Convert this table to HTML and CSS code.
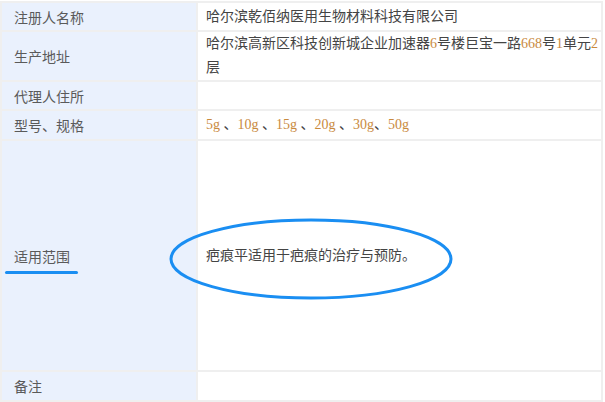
FILE: index.html
```html
<!DOCTYPE html>
<html lang="zh-CN">
<head>
    <meta charset="UTF-8">
    <title>产品注册信息</title>
    <link rel="stylesheet" href="styles.css">
</head>
<body>
    <table class="info-table">
        <tr class="row-1">
            <th>注册人名称</th>
            <td>哈尔滨乾佰纳医用生物材料科技有限公司</td>
        </tr>
        <tr class="row-2">
            <th>生产地址</th>
            <td>哈尔滨高新区科技创新城企业加速器<span class="num">6</span>号楼巨宝一路<span class="num">668</span>号<span class="num">1</span>单元<span class="num">2</span>层</td>
        </tr>
        <tr class="row-3">
            <th>代理人住所</th>
            <td></td>
        </tr>
        <tr class="row-4">
            <th>型号、规格</th>
            <td><span class="num">5g</span> 、<span class="num">10g</span> 、<span class="num">15g</span> 、<span class="num">20g</span> 、<span class="num">30g</span>、<span class="num">50g</span></td>
        </tr>
        <tr class="row-5">
            <th><span class="marked">适用范围</span></th>
            <td class="circled">
                疤痕平适用于疤痕的治疗与预防。
                <!-- 手绘圈注 -->
                <svg class="ring" width="286" height="84" viewBox="0 0 286 84">
                    <ellipse cx="143" cy="42" rx="140" ry="39" fill="none" stroke="#1a8ef2" stroke-width="3"/>
                </svg>
            </td>
        </tr>
        <tr class="row-6">
            <th>备注</th>
            <td></td>
        </tr>
    </table>
</body>
</html>
```

FILE: styles.css
```css
body { margin: 0; background: #fff; font-family: "Noto Sans CJK SC", sans-serif; }
.info-table { width: 603px; margin-top: 1px; border-collapse: collapse; table-layout: fixed; font-size: 14px; }
.info-table th, .info-table td { border: 2px solid #efefef; vertical-align: middle; }
.info-table th { width: 182px; padding: 0 0 0 12px; text-align: left; font-weight: normal; color: #5a5a5a; background: #eaf1fd; }
.info-table td { padding: 0 0 0 8px; color: #444; line-height: 24px; font-family: "Liberation Serif", "Noto Sans CJK SC", serif; }
.num { color: #c98a3e; }
.row-1 { height: 29px; }
.row-2 { height: 47px; }
.row-3 { height: 29px; }
.row-4 { height: 30px; }
.row-5 { height: 231px; }
.row-6 { height: 30px; }
.row-5 th, .row-5 td { position: relative; }
.marked::after { content: ""; position: absolute; left: 3px; top: 130px; width: 73px; height: 3px; border-radius: 2px; background: #1a8ef2; }
.ring { position: absolute; left: -30px; top: 76px; }
```
